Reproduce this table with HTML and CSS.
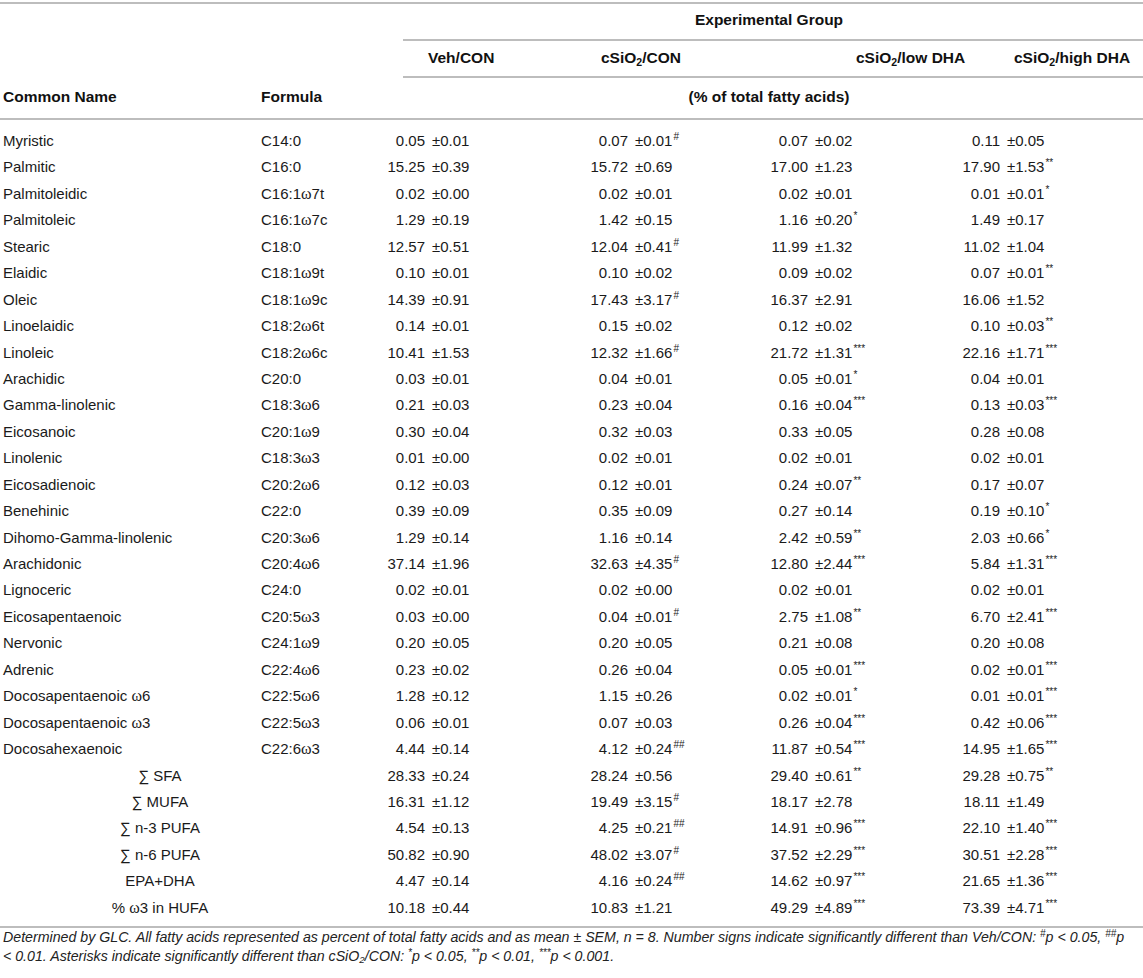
FILE: index.html
```html
<!DOCTYPE html>
<html lang="en">
<head>
<meta charset="utf-8">
<title>Fatty acid composition</title>
<link rel="stylesheet" href="styles.css">
</head>
<body>
<div class="wrap">
<table class="fa">
<colgroup>
<col class="c-name"><col class="c-form"><col class="c-d1"><col class="c-d2"><col class="c-d3"><col class="c-d4">
</colgroup>
<thead>
<tr class="r1">
<th colspan="2" rowspan="2"></th>
<th colspan="4" class="grp rule indent">Experimental Group</th>
</tr>
<tr class="r2">
<th class="h1 rule indent">Veh/CON</th>
<th class="h2 rule">cSiO<sub>2</sub>/CON</th>
<th class="h3 rule">cSiO<sub>2</sub>/low DHA</th>
<th class="h4 rule">cSiO<sub>2</sub>/high DHA</th>
</tr>
<tr class="r3">
<th class="nm">Common Name</th>
<th class="fm">Formula</th>
<th colspan="4" class="grp">(% of total fatty acids)</th>
</tr>
</thead>
<tbody>
<tr><td class="nm">Myristic</td><td class="fm">C14:0</td><td class="v"><span class="m">0.05</span><span class="sd">±0.01</span></td><td class="v"><span class="m">0.07</span><span class="sd">±0.01<sup>#</sup></span></td><td class="v"><span class="m">0.07</span><span class="sd">±0.02</span></td><td class="v"><span class="m">0.11</span><span class="sd">±0.05</span></td></tr>
<tr><td class="nm">Palmitic</td><td class="fm">C16:0</td><td class="v"><span class="m">15.25</span><span class="sd">±0.39</span></td><td class="v"><span class="m">15.72</span><span class="sd">±0.69</span></td><td class="v"><span class="m">17.00</span><span class="sd">±1.23</span></td><td class="v"><span class="m">17.90</span><span class="sd">±1.53<sup>**</sup></span></td></tr>
<tr><td class="nm">Palmitoleidic</td><td class="fm">C16:1<span class="w">ω</span>7t</td><td class="v"><span class="m">0.02</span><span class="sd">±0.00</span></td><td class="v"><span class="m">0.02</span><span class="sd">±0.01</span></td><td class="v"><span class="m">0.02</span><span class="sd">±0.01</span></td><td class="v"><span class="m">0.01</span><span class="sd">±0.01<sup>*</sup></span></td></tr>
<tr><td class="nm">Palmitoleic</td><td class="fm">C16:1<span class="w">ω</span>7c</td><td class="v"><span class="m">1.29</span><span class="sd">±0.19</span></td><td class="v"><span class="m">1.42</span><span class="sd">±0.15</span></td><td class="v"><span class="m">1.16</span><span class="sd">±0.20<sup>*</sup></span></td><td class="v"><span class="m">1.49</span><span class="sd">±0.17</span></td></tr>
<tr><td class="nm">Stearic</td><td class="fm">C18:0</td><td class="v"><span class="m">12.57</span><span class="sd">±0.51</span></td><td class="v"><span class="m">12.04</span><span class="sd">±0.41<sup>#</sup></span></td><td class="v"><span class="m">11.99</span><span class="sd">±1.32</span></td><td class="v"><span class="m">11.02</span><span class="sd">±1.04</span></td></tr>
<tr><td class="nm">Elaidic</td><td class="fm">C18:1<span class="w">ω</span>9t</td><td class="v"><span class="m">0.10</span><span class="sd">±0.01</span></td><td class="v"><span class="m">0.10</span><span class="sd">±0.02</span></td><td class="v"><span class="m">0.09</span><span class="sd">±0.02</span></td><td class="v"><span class="m">0.07</span><span class="sd">±0.01<sup>**</sup></span></td></tr>
<tr><td class="nm">Oleic</td><td class="fm">C18:1<span class="w">ω</span>9c</td><td class="v"><span class="m">14.39</span><span class="sd">±0.91</span></td><td class="v"><span class="m">17.43</span><span class="sd">±3.17<sup>#</sup></span></td><td class="v"><span class="m">16.37</span><span class="sd">±2.91</span></td><td class="v"><span class="m">16.06</span><span class="sd">±1.52</span></td></tr>
<tr><td class="nm">Linoelaidic</td><td class="fm">C18:2<span class="w">ω</span>6t</td><td class="v"><span class="m">0.14</span><span class="sd">±0.01</span></td><td class="v"><span class="m">0.15</span><span class="sd">±0.02</span></td><td class="v"><span class="m">0.12</span><span class="sd">±0.02</span></td><td class="v"><span class="m">0.10</span><span class="sd">±0.03<sup>**</sup></span></td></tr>
<tr><td class="nm">Linoleic</td><td class="fm">C18:2<span class="w">ω</span>6c</td><td class="v"><span class="m">10.41</span><span class="sd">±1.53</span></td><td class="v"><span class="m">12.32</span><span class="sd">±1.66<sup>#</sup></span></td><td class="v"><span class="m">21.72</span><span class="sd">±1.31<sup>***</sup></span></td><td class="v"><span class="m">22.16</span><span class="sd">±1.71<sup>***</sup></span></td></tr>
<tr><td class="nm">Arachidic</td><td class="fm">C20:0</td><td class="v"><span class="m">0.03</span><span class="sd">±0.01</span></td><td class="v"><span class="m">0.04</span><span class="sd">±0.01</span></td><td class="v"><span class="m">0.05</span><span class="sd">±0.01<sup>*</sup></span></td><td class="v"><span class="m">0.04</span><span class="sd">±0.01</span></td></tr>
<tr><td class="nm">Gamma-linolenic</td><td class="fm">C18:3<span class="w">ω</span>6</td><td class="v"><span class="m">0.21</span><span class="sd">±0.03</span></td><td class="v"><span class="m">0.23</span><span class="sd">±0.04</span></td><td class="v"><span class="m">0.16</span><span class="sd">±0.04<sup>***</sup></span></td><td class="v"><span class="m">0.13</span><span class="sd">±0.03<sup>***</sup></span></td></tr>
<tr><td class="nm">Eicosanoic</td><td class="fm">C20:1<span class="w">ω</span>9</td><td class="v"><span class="m">0.30</span><span class="sd">±0.04</span></td><td class="v"><span class="m">0.32</span><span class="sd">±0.03</span></td><td class="v"><span class="m">0.33</span><span class="sd">±0.05</span></td><td class="v"><span class="m">0.28</span><span class="sd">±0.08</span></td></tr>
<tr><td class="nm">Linolenic</td><td class="fm">C18:3<span class="w">ω</span>3</td><td class="v"><span class="m">0.01</span><span class="sd">±0.00</span></td><td class="v"><span class="m">0.02</span><span class="sd">±0.01</span></td><td class="v"><span class="m">0.02</span><span class="sd">±0.01</span></td><td class="v"><span class="m">0.02</span><span class="sd">±0.01</span></td></tr>
<tr><td class="nm">Eicosadienoic</td><td class="fm">C20:2<span class="w">ω</span>6</td><td class="v"><span class="m">0.12</span><span class="sd">±0.03</span></td><td class="v"><span class="m">0.12</span><span class="sd">±0.01</span></td><td class="v"><span class="m">0.24</span><span class="sd">±0.07<sup>**</sup></span></td><td class="v"><span class="m">0.17</span><span class="sd">±0.07</span></td></tr>
<tr><td class="nm">Benehinic</td><td class="fm">C22:0</td><td class="v"><span class="m">0.39</span><span class="sd">±0.09</span></td><td class="v"><span class="m">0.35</span><span class="sd">±0.09</span></td><td class="v"><span class="m">0.27</span><span class="sd">±0.14</span></td><td class="v"><span class="m">0.19</span><span class="sd">±0.10<sup>*</sup></span></td></tr>
<tr><td class="nm">Dihomo-Gamma-linolenic</td><td class="fm">C20:3<span class="w">ω</span>6</td><td class="v"><span class="m">1.29</span><span class="sd">±0.14</span></td><td class="v"><span class="m">1.16</span><span class="sd">±0.14</span></td><td class="v"><span class="m">2.42</span><span class="sd">±0.59<sup>**</sup></span></td><td class="v"><span class="m">2.03</span><span class="sd">±0.66<sup>*</sup></span></td></tr>
<tr><td class="nm">Arachidonic</td><td class="fm">C20:4<span class="w">ω</span>6</td><td class="v"><span class="m">37.14</span><span class="sd">±1.96</span></td><td class="v"><span class="m">32.63</span><span class="sd">±4.35<sup>#</sup></span></td><td class="v"><span class="m">12.80</span><span class="sd">±2.44<sup>***</sup></span></td><td class="v"><span class="m">5.84</span><span class="sd">±1.31<sup>***</sup></span></td></tr>
<tr><td class="nm">Lignoceric</td><td class="fm">C24:0</td><td class="v"><span class="m">0.02</span><span class="sd">±0.01</span></td><td class="v"><span class="m">0.02</span><span class="sd">±0.00</span></td><td class="v"><span class="m">0.02</span><span class="sd">±0.01</span></td><td class="v"><span class="m">0.02</span><span class="sd">±0.01</span></td></tr>
<tr><td class="nm">Eicosapentaenoic</td><td class="fm">C20:5<span class="w">ω</span>3</td><td class="v"><span class="m">0.03</span><span class="sd">±0.00</span></td><td class="v"><span class="m">0.04</span><span class="sd">±0.01<sup>#</sup></span></td><td class="v"><span class="m">2.75</span><span class="sd">±1.08<sup>**</sup></span></td><td class="v"><span class="m">6.70</span><span class="sd">±2.41<sup>***</sup></span></td></tr>
<tr><td class="nm">Nervonic</td><td class="fm">C24:1<span class="w">ω</span>9</td><td class="v"><span class="m">0.20</span><span class="sd">±0.05</span></td><td class="v"><span class="m">0.20</span><span class="sd">±0.05</span></td><td class="v"><span class="m">0.21</span><span class="sd">±0.08</span></td><td class="v"><span class="m">0.20</span><span class="sd">±0.08</span></td></tr>
<tr><td class="nm">Adrenic</td><td class="fm">C22:4<span class="w">ω</span>6</td><td class="v"><span class="m">0.23</span><span class="sd">±0.02</span></td><td class="v"><span class="m">0.26</span><span class="sd">±0.04</span></td><td class="v"><span class="m">0.05</span><span class="sd">±0.01<sup>***</sup></span></td><td class="v"><span class="m">0.02</span><span class="sd">±0.01<sup>***</sup></span></td></tr>
<tr><td class="nm">Docosapentaenoic <span class="w">ω</span>6</td><td class="fm">C22:5<span class="w">ω</span>6</td><td class="v"><span class="m">1.28</span><span class="sd">±0.12</span></td><td class="v"><span class="m">1.15</span><span class="sd">±0.26</span></td><td class="v"><span class="m">0.02</span><span class="sd">±0.01<sup>*</sup></span></td><td class="v"><span class="m">0.01</span><span class="sd">±0.01<sup>***</sup></span></td></tr>
<tr><td class="nm">Docosapentaenoic <span class="w">ω</span>3</td><td class="fm">C22:5<span class="w">ω</span>3</td><td class="v"><span class="m">0.06</span><span class="sd">±0.01</span></td><td class="v"><span class="m">0.07</span><span class="sd">±0.03</span></td><td class="v"><span class="m">0.26</span><span class="sd">±0.04<sup>***</sup></span></td><td class="v"><span class="m">0.42</span><span class="sd">±0.06<sup>***</sup></span></td></tr>
<tr><td class="nm">Docosahexaenoic</td><td class="fm">C22:6<span class="w">ω</span>3</td><td class="v"><span class="m">4.44</span><span class="sd">±0.14</span></td><td class="v"><span class="m">4.12</span><span class="sd">±0.24<sup>##</sup></span></td><td class="v"><span class="m">11.87</span><span class="sd">±0.54<sup>***</sup></span></td><td class="v"><span class="m">14.95</span><span class="sd">±1.65<sup>***</sup></span></td></tr>
<tr><td class="sum" colspan="2">∑ SFA</td><td class="v"><span class="m">28.33</span><span class="sd">±0.24</span></td><td class="v"><span class="m">28.24</span><span class="sd">±0.56</span></td><td class="v"><span class="m">29.40</span><span class="sd">±0.61<sup>**</sup></span></td><td class="v"><span class="m">29.28</span><span class="sd">±0.75<sup>**</sup></span></td></tr>
<tr><td class="sum" colspan="2">∑ MUFA</td><td class="v"><span class="m">16.31</span><span class="sd">±1.12</span></td><td class="v"><span class="m">19.49</span><span class="sd">±3.15<sup>#</sup></span></td><td class="v"><span class="m">18.17</span><span class="sd">±2.78</span></td><td class="v"><span class="m">18.11</span><span class="sd">±1.49</span></td></tr>
<tr><td class="sum" colspan="2">∑ n-3 PUFA</td><td class="v"><span class="m">4.54</span><span class="sd">±0.13</span></td><td class="v"><span class="m">4.25</span><span class="sd">±0.21<sup>##</sup></span></td><td class="v"><span class="m">14.91</span><span class="sd">±0.96<sup>***</sup></span></td><td class="v"><span class="m">22.10</span><span class="sd">±1.40<sup>***</sup></span></td></tr>
<tr><td class="sum" colspan="2">∑ n-6 PUFA</td><td class="v"><span class="m">50.82</span><span class="sd">±0.90</span></td><td class="v"><span class="m">48.02</span><span class="sd">±3.07<sup>#</sup></span></td><td class="v"><span class="m">37.52</span><span class="sd">±2.29<sup>***</sup></span></td><td class="v"><span class="m">30.51</span><span class="sd">±2.28<sup>***</sup></span></td></tr>
<tr><td class="sum" colspan="2">EPA+DHA</td><td class="v"><span class="m">4.47</span><span class="sd">±0.14</span></td><td class="v"><span class="m">4.16</span><span class="sd">±0.24<sup>##</sup></span></td><td class="v"><span class="m">14.62</span><span class="sd">±0.97<sup>***</sup></span></td><td class="v"><span class="m">21.65</span><span class="sd">±1.36<sup>***</sup></span></td></tr>
<tr><td class="sum" colspan="2">% <span class="w">ω</span>3 in HUFA</td><td class="v"><span class="m">10.18</span><span class="sd">±0.44</span></td><td class="v"><span class="m">10.83</span><span class="sd">±1.21</span></td><td class="v"><span class="m">49.29</span><span class="sd">±4.89<sup>***</sup></span></td><td class="v"><span class="m">73.39</span><span class="sd">±4.71<sup>***</sup></span></td></tr>
</tbody>
</table>
<p class="note">Determined by GLC. All fatty acids represented as percent of total fatty acids and as mean ± SEM, <i>n</i> = 8. Number signs indicate significantly different than Veh/CON: <sup>#</sup>p &lt;&nbsp;0.05, <sup>##</sup>p &lt;&nbsp;0.01. Asterisks indicate significantly different than cSiO<sub>2</sub>/CON: <sup>*</sup>p &lt;&nbsp;0.05, <sup>**</sup>p &lt;&nbsp;0.01, <sup>***</sup>p &lt;&nbsp;0.001.</p>
</div>
</body>
</html>
```

FILE: styles.css
```css
html, body {
  margin: 0;
  padding: 0;
  background: #ffffff;
}

body {
  font-family: "Liberation Sans", Arial, Helvetica, sans-serif;
  font-size: 15px;
  color: #1a1a1a;
}

.wrap {
  width: 1143px;
  padding-top: 2px;
}

.fa {
  width: 1143px;
  table-layout: fixed;
  border-collapse: collapse;
  border-top: 2px solid #bdbdbd;
  border-bottom: 2px solid #bdbdbd;
}

.c-name { width: 258px; }
.c-form { width: 122px; }
.c-d1 { width: 203px; }
.c-d2 { width: 180px; }
.c-d3 { width: 192px; }
.c-d4 { width: 188px; }

th {
  font-weight: bold;
  font-size: 15.5px;
  line-height: 18px;
  text-align: left;
  padding: 0;
  color: #111;
  white-space: nowrap;
}

th sub, .note sub {
  font-size: 0.68em;
  vertical-align: -0.25em;
  line-height: 0;
}

.rule {
  background: linear-gradient(#bdbdbd, #bdbdbd) no-repeat right bottom / 100% 2px;
}

.rule.indent {
  background-size: calc(100% - 23px) 2px;
}

.r1 th {
  padding-top: 7px;
  padding-bottom: 12px;
}

.r2 th {
  padding-top: 8px;
  padding-bottom: 11px;
}

.r3 th {
  padding-top: 10px;
  padding-bottom: 12px;
  border-bottom: 2px solid #bdbdbd;
}

.grp {
  text-align: center;
  padding-left: 15px;
}

.h1 { padding-left: 48px; }
.h2 { padding-left: 18px; }
.h3 { padding-left: 93px; }
.h4 { padding-left: 59px; }

th.nm, td.nm { padding-left: 3px; }
th.fm, td.fm { padding-left: 3px; }

td {
  padding: 0;
  height: 26.44px;
  line-height: 26.44px;
  white-space: nowrap;
  vertical-align: middle;
}

tbody tr:first-child td {
  padding-top: 8px;
}

tbody tr:last-child td {
  padding-bottom: 5px;
}

.w {
  font-family: "Liberation Serif", "Times New Roman", serif;
  font-size: 16px;
}

.sum {
  text-align: center;
  padding-right: 60px;
}

.v {
  padding-left: 5px;
}

.m {
  display: inline-block;
  width: 40px;
  text-align: right;
}

.sd {
  padding-left: 7px;
}

.v sup {
  font-size: 10px;
  line-height: 0;
  vertical-align: 6px;
  margin-left: 1px;
}

.note {
  margin: 0;
  padding: 0 0 0 3px;
  font-style: italic;
  font-size: 14.2px;
  line-height: 19px;
  color: #222;
}

.note i {
  font-style: italic;
}

.note sup {
  font-size: 10px;
  line-height: 0;
  vertical-align: 5px;
}
```
